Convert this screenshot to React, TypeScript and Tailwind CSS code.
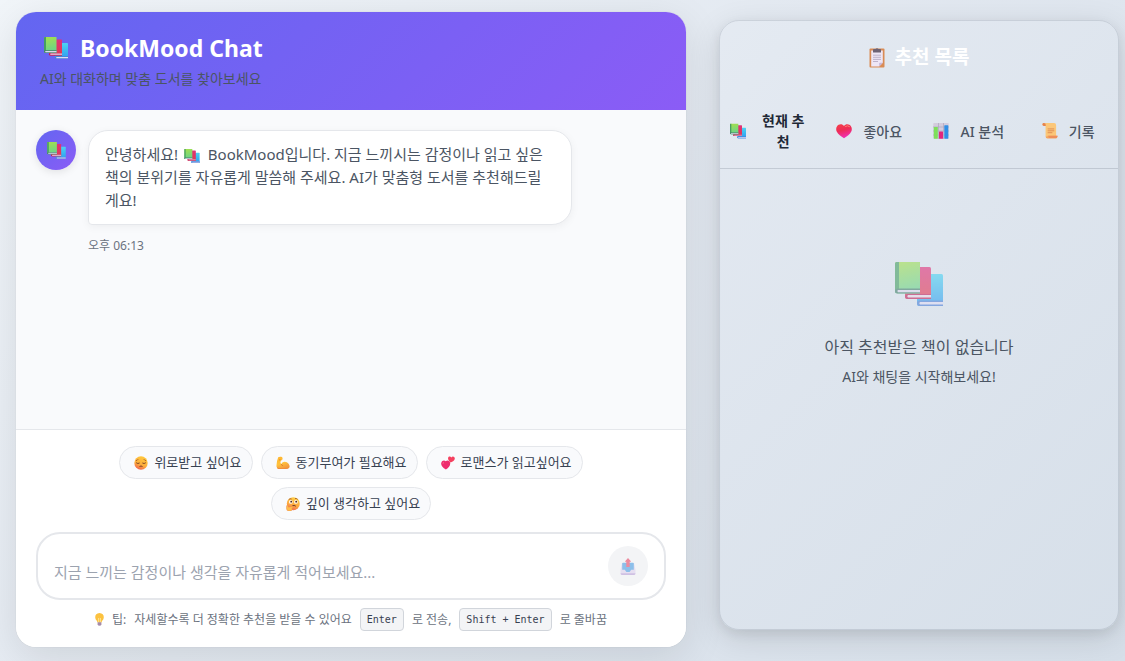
import { useId, useState } from 'react'
import type { ReactNode } from 'react'

interface IconProps {
  className?: string
}

function BooksIcon({ className }: IconProps) {
  const id = useId()
  return (
    <svg viewBox="0 0 48 44" className={className} aria-hidden="true">
      <defs>
        <linearGradient id={`${id}g`} x1="0" y1="0" x2="0.2" y2="1">
          <stop offset="0" stopColor="#a6e04b" />
          <stop offset="1" stopColor="#69d48b" />
        </linearGradient>
        <linearGradient id={`${id}r`} x1="0" y1="0" x2="0" y2="1">
          <stop offset="0" stopColor="#e0307a" />
          <stop offset="1" stopColor="#e33a4c" />
        </linearGradient>
        <linearGradient id={`${id}b`} x1="0" y1="0" x2="0" y2="1">
          <stop offset="0" stopColor="#4bd3f2" />
          <stop offset="1" stopColor="#2f9bf0" />
        </linearGradient>
      </defs>
      <path d="M22 13q0-1 1-1h23.500q1.500 0 1.500 1.500V44H24q-2 0-2-2.500z" fill={`url(#${id}b)`} />
      <path d="M22 41q0-2.500 2.500-2.500H48V44H24.500Q22 44 22 41z" fill="#4b7fd6" />
      <path d="M25 40h23v2.500H25q-1.500-1.200 0-2.500z" fill="#e0dcf3" />
      <path d="M10 6q0-1 1-1h23.500Q36 5 36 6.500V37H12.500Q10 37 10 34z" fill={`url(#${id}r)`} />
      <path d="M10 34.500Q10 32 12.500 32H36v5H12.500Q10 37 10 34.500z" fill="#c21f58" />
      <path d="M13 33h23v2.500H13q-1.500-1.200 0-2.500z" fill="#ecd9e6" />
      <path d="M0 1.500Q0 0 1.500 0H25v31.500H2.500Q0 31.500 0 29z" fill={`url(#${id}g)`} />
      <path d="M0 1.500Q0 0 1.500 0H4v31H2q-2 0-2-2z" fill="#459f62" />
      <path d="M0 29q0-2.500 2.500-2.500H25v5H2.500Q0 31.500 0 29z" fill="#44806c" />
      <path d="M3 28h22v2.300H3q-1.500-1.200 0-2.300z" fill="#ddd8ec" />
    </svg>
  )
}

function ClipboardIcon({ className }: IconProps) {
  return (
    <svg viewBox="0 0 16 20" className={className} aria-hidden="true">
      <rect x="0.500" y="0.500" width="15" height="19" rx="1" fill="#d98b55" />
      <path d="M2.200 2.500h11.600v12.200l-3.600 3.800h-8z" fill="#eee6f6" />
      <path d="M13.800 14.700l-3.600 3.800v-3q0-.8.8-.8z" fill="#c7b6d8" />
      <path d="M4 1.800Q4 1 5 1h1.500q1.500-1.500 3 0H11q1 0 1 .8v2.700H4z" fill="#6d6375" />
      <path d="M4 7.200h8M4 9.300h8M4 11.400h8M4 13.500h5" stroke="#b7abc5" strokeWidth="0.900" />
    </svg>
  )
}

function HeartIcon({ className }: IconProps) {
  const id = useId()
  return (
    <svg viewBox="0 0 16 16" className={className} aria-hidden="true">
      <defs>
        <linearGradient id={id} x1="0" y1="0" x2="0.300" y2="1">
          <stop offset="0" stopColor="#f5404a" />
          <stop offset="0.500" stopColor="#ee2c56" />
          <stop offset="1" stopColor="#f030b0" />
        </linearGradient>
      </defs>
      <path
        d="M8 3.100C6.700 1 4.300.8 2.600 1.800.3 3.200-.4 6 .7 8.500 2 11.400 5 13.500 8 15.200c3-1.700 6-3.800 7.300-6.700 1.100-2.500.4-5.300-1.900-6.700C11.700.8 9.300 1 8 3.100z"
        fill={`url(#${id})`}
      />
      <path d="M9.500 3.400q2-1.500 4 .2" stroke="#ff7f76" strokeWidth="1" fill="none" strokeLinecap="round" />
    </svg>
  )
}

function ChartIcon({ className }: IconProps) {
  return (
    <svg viewBox="0 0 16 16" className={className} aria-hidden="true">
      <rect x="0.300" y="0" width="15.400" height="15.800" rx="0.800" fill="#d3ccdd" />
      <path d="M5.500 0v16M10.500 0v16M0 4h16M0 8h16M0 12h16" stroke="#aea6bd" strokeWidth="0.700" />
      <rect x="0.800" y="4" width="4" height="11.800" rx="0.500" fill="#7de05a" />
      <rect x="6" y="8.500" width="4" height="7.300" rx="0.500" fill="#e2267c" />
      <rect x="11.300" y="2.200" width="4" height="13.600" rx="0.500" fill="#2f8fe6" />
    </svg>
  )
}

function ScrollIcon({ className }: IconProps) {
  return (
    <svg viewBox="0 0 16 17" className={className} aria-hidden="true">
      <path d="M1.500 0h10.800q2.200 0 2.200 2.300V14H3.300V3H1.500Q0 3 0 1.500T1.500 0z" fill="#fbc779" />
      <path d="M1.500 0Q3.500 0 3.500 2v1.200H1.500Q0 3 0 1.500T1.500 0z" fill="#e5824f" />
      <path d="M5.300 13.500H16q0 3-2.500 3H5.500q-2.200 0-2.200-2.500h2z" fill="#f6a55c" />
      <path d="M6 13.600h10q0 1.300-1 2.300H7z" fill="#ee8f5b" />
      <path d="M5.500 6.300h7M5.500 8.300h7M5.500 10.300h5" stroke="#dc8550" strokeWidth="0.900" />
    </svg>
  )
}

function PensiveIcon({ className }: IconProps) {
  const id = useId()
  return (
    <svg viewBox="0 0 14 14" className={className} aria-hidden="true">
      <defs>
        <linearGradient id={id} x1="0.700" y1="0" x2="0.300" y2="1">
          <stop offset="0" stopColor="#ffc93c" />
          <stop offset="0.600" stopColor="#fdae3c" />
          <stop offset="1" stopColor="#f0604d" />
        </linearGradient>
      </defs>
      <circle cx="7" cy="7" r="6.700" fill={`url(#${id})`} />
      <path d="M2 4.600q1.200 0 2.200-1.400M12 4.600q-1.200 0-2.200-1.400" stroke="#8f4326" strokeWidth="0.700" fill="none" />
      <path d="M2.200 6.700q1.600 1.500 3.400.3M11.800 6.700q-1.600 1.500-3.400.3" stroke="#5c2b25" strokeWidth="0.800" fill="none" />
      <path d="M5.500 10.500q1.500-1 3 0" stroke="#5c2b25" strokeWidth="0.800" fill="none" />
    </svg>
  )
}

function MuscleIcon({ className }: IconProps) {
  const id = useId()
  return (
    <svg viewBox="0 0 14 14" className={className} aria-hidden="true">
      <defs>
        <linearGradient id={id} x1="0" y1="0" x2="0.400" y2="1">
          <stop offset="0" stopColor="#ffb52e" />
          <stop offset="0.600" stopColor="#ffc23c" />
          <stop offset="1" stopColor="#f39a3e" />
        </linearGradient>
      </defs>
      <path
        d="M2.200 1.300Q3.500.3 5.200.8q1.500.4 1.400 1.800l-.3 1.200q-.5.800-1.500.7l-.4 2.600q.6.300.9.900 1-2.200 3.500-2.200 2.300 0 3.800 2 1.500 2.200.8 3.700-.6 1.300-3 1.400L3 13Q.6 12.800.5 10.400.3 6 2.200 1.300z"
        fill={`url(#${id})`}
      />
      <path d="M5.300 8q.3 1.600 1.800 1.800M3 3.900h1.700" stroke="#db7a2e" strokeWidth="0.800" fill="none" />
      <path d="M1 11.400Q5 12.800 12.900 11.500q-.7 1.300-2.800 1.300L3 13q-1.500 0-2-1.600z" fill="#ef8a3c" />
    </svg>
  )
}

function TwoHeartsIcon({ className }: IconProps) {
  return (
    <svg viewBox="0 0 14 14" className={className} aria-hidden="true">
      <path
        d="M4.800 5.300C3.300 3.900.9 4.500.3 6.700c-.7 2.400 1.200 4.800 4.600 6.900 2.800-1.600 4.600-4.200 4.300-6.500-.3-2.200-3-3.400-4.400-1.800z"
        fill="#ee2d6e"
      />
      <path
        d="M10.400 1.400C9.500-.1 7.500.2 7.100 1.700c-.3 1.500.4 3.300 2.500 4.800 2.300-.7 3.900-2 4.200-3.700.2-2-2.200-3.100-3.400-1.400z"
        fill="#f5405f"
      />
      <path d="M3 6.200q-1 .3-1 1.600" stroke="#ff7590" strokeWidth="0.800" fill="none" />
    </svg>
  )
}

function ThinkingIcon({ className }: IconProps) {
  const id = useId()
  return (
    <svg viewBox="0 0 14 14" className={className} aria-hidden="true">
      <defs>
        <linearGradient id={id} x1="0.600" y1="0" x2="0.300" y2="1">
          <stop offset="0" stopColor="#ffd044" />
          <stop offset="0.600" stopColor="#fca63f" />
          <stop offset="1" stopColor="#ef6454" />
        </linearGradient>
      </defs>
      <circle cx="7.300" cy="6.700" r="6.500" fill={`url(#${id})`} />
      <circle cx="4.800" cy="4.900" r="1.900" fill="#fff6e8" />
      <circle cx="9.900" cy="4.900" r="1.900" fill="#fff6e8" />
      <circle cx="5.200" cy="4.700" r="0.900" fill="#482422" />
      <circle cx="10.200" cy="4.700" r="0.900" fill="#482422" />
      <path d="M2.800 2.500Q4 1.300 5.600 2M9 1.500q1.700-.4 2.700.9" stroke="#8f4326" strokeWidth="0.700" fill="none" />
      <path d="M6.200 9q2-1.300 3.600.2" stroke="#5c2b25" strokeWidth="0.900" fill="none" />
      <path
        d="M.6 8.700q1-.8 1.600.2l.3 1.300 4.300-.9q1.300 0 .9 1l-1.900.7q1.200.8-.1 2.500-.7.600-2.500.6Q.500 13.900.4 11.500z"
        fill="#ffbd4a"
        stroke="#e87a49"
        strokeWidth="0.400"
      />
    </svg>
  )
}

function OutboxIcon({ className }: IconProps) {
  return (
    <svg viewBox="0 0 16 17" className={className} aria-hidden="true">
      <path d="M2 5h12l1.500 7v3q0 2-1.500 2H2Q.5 17 .5 15v-3z" fill="#e6dff1" />
      <path d="M.5 15.300h15q0 1.700-1.500 1.700H2Q.5 17 .5 15.300z" fill="#cfc1e3" />
      <path d="M3 4.800h10q.8 0 .8.800v6.200h-2.600l-1.600 2.100H6.400l-1.600-2.100H2.200V5.600q0-.8.800-.8z" fill="#8dbfea" />
      <path d="M8 0l2.900 3.300q.2.500-.4.500h-.8V9H6.300V3.800h-.8q-.6 0-.4-.5z" fill="#ec8b9f" />
    </svg>
  )
}

function BulbIcon({ className }: IconProps) {
  return (
    <svg viewBox="0 0 9 13" className={className} aria-hidden="true">
      <path d="M4.500 0Q8.800.3 8.800 4.300q0 2-1.600 3.500l-.8 1.700H2.600l-.8-1.700Q.2 6.300.2 4.300.2.3 4.500 0z" fill="#fcc240" />
      <path d="M3.600 5v4M5.400 5v4" stroke="#fff0b5" strokeWidth="0.700" />
      <path d="M2.600 9.300h3.800v2.100q-.3 1.300-1.900 1.300t-1.900-1.300z" fill="#a58ba9" />
    </svg>
  )
}

const quickMoods = [
  { label: '위로받고 싶어요', Icon: PensiveIcon },
  { label: '동기부여가 필요해요', Icon: MuscleIcon },
  { label: '로맨스가 읽고싶어요', Icon: TwoHeartsIcon },
  { label: '깊이 생각하고 싶어요', Icon: ThinkingIcon },
]

const tabs = [
  { id: 'current', label: '현재 추천', Icon: BooksIcon },
  { id: 'liked', label: '좋아요', Icon: HeartIcon },
  { id: 'analysis', label: 'AI 분석', Icon: ChartIcon },
  { id: 'history', label: '기록', Icon: ScrollIcon },
]

function Key({ children }: { children: ReactNode }) {
  return (
    <kbd className="rounded border border-[#d1d5db] bg-[#f3f4f6] px-1.5 font-['DejaVu_Sans_Mono',monospace] text-[10px] leading-[21px] text-[#374151]">
      {children}
    </kbd>
  )
}

function ChatPanel() {
  const [message, setMessage] = useState('')

  return (
    <section className="flex min-w-0 flex-1 flex-col overflow-hidden rounded-[20px] bg-white shadow-[0_10px_40px_rgba(0,0,0,0.1),0_0_1px_rgba(0,0,0,0.2)]">
      {/* Header */}
      <header className="bg-[linear-gradient(135deg,#6366f1,#8b5cf6)] px-6 py-5">
        <h1 className="flex items-center gap-3 pl-1 text-[23px] leading-8 font-bold text-white">
          <BooksIcon className="h-[22px] w-6" />
          BookMood Chat
        </h1>
        <p className="mt-1 text-sm leading-[22px] text-[#4b5563]">AI와 대화하며 맞춤 도서를 찾아보세요</p>
      </header>

      {/* Messages */}
      <div className="flex-1 bg-[#f9fafc] p-5">
        <div className="flex max-w-[85%] items-start gap-3">
          <div className="flex size-10 shrink-0 items-center justify-center rounded-full bg-[linear-gradient(135deg,#6366f1,#8b5cf6)] shadow-[0_2px_8px_rgba(0,0,0,0.1)]">
            <BooksIcon className="h-[17px] w-[19px]" />
          </div>
          <div>
            <p className="rounded-[20px] rounded-bl-sm border border-[#e5e7eb] bg-white py-3 pr-5 pl-4 text-[15px] leading-[23px] text-[#4b5563] shadow-[0_2px_8px_rgba(0,0,0,0.05)]">
              안녕하세요! <BooksIcon className="mr-1 ml-0.5 inline h-[14px] w-4" /> BookMood입니다. 지금 느끼시는 감정이나 읽고 싶은
              책의 분위기를 자유롭게 말씀해 주세요. AI가 맞춤형 도서를 추천해드릴게요!
            </p>
            <time className="mt-[11px] block text-xs leading-5 text-[#6b7280]">오후 06:13</time>
          </div>
        </div>
      </div>

      {/* Input */}
      <footer className="border-t border-[#e5e7eb] bg-white px-5 py-4">
        <div className="flex flex-wrap justify-center gap-2">
          {quickMoods.map(({ label, Icon }) => (
            <button
              key={label}
              type="button"
              className="flex items-center gap-1.5 rounded-full border border-[#e5e7eb] bg-[#f9fafc] py-1.5 pr-2.5 pl-3.5 text-[13px] leading-[19px] text-[#374151]"
            >
              <Icon className="size-3.5" />
              {label}
            </button>
          ))}
        </div>

        <form
          onSubmit={(e) => e.preventDefault()}
          className="mt-3 flex items-end gap-3 rounded-3xl border-2 border-[#e5e7eb] bg-white px-4 py-3"
        >
          <textarea
            aria-label="메시지"
            rows={1}
            value={message}
            onChange={(e) => setMessage(e.target.value)}
            placeholder="지금 느끼는 감정이나 생각을 자유롭게 적어보세요..."
            className="h-10 flex-1 resize-none overflow-hidden bg-transparent pt-3.5 text-[15px] leading-6 text-[#374151] outline-none placeholder:text-[#9ca3af]"
          />
          <button
            type="submit"
            aria-label="전송"
            className="flex size-10 shrink-0 items-center justify-center rounded-full bg-[#f3f4f6]"
          >
            <OutboxIcon className="h-[17px] w-4" />
          </button>
        </form>

        <div className="mt-2 flex flex-wrap items-center justify-center gap-2 text-xs text-[#6b7280]">
          <BulbIcon className="h-[13px] w-[9px]" />
          <span>팁:</span>
          <span>자세할수록 더 정확한 추천을 받을 수 있어요</span>
          <Key>Enter</Key>
          <span>로 전송,</span>
          <Key>Shift + Enter</Key>
          <span>로 줄바꿈</span>
        </div>
      </footer>
    </section>
  )
}

function RecommendationPanel() {
  const [activeTab, setActiveTab] = useState('current')

  return (
    <aside className="mt-2 mb-[17px] w-[400px] shrink-0 rounded-[20px] border border-gray-500/20 shadow-[0_8px_32px_rgba(0,0,0,0.12),0_4px_12px_rgba(0,0,0,0.07)]">
      <h2 className="flex items-center justify-center gap-2.5 p-6 text-[19px] leading-[25px] font-bold text-white">
        <ClipboardIcon className="h-5 w-4" />
        추천 목록
      </h2>

      <div role="tablist" className="flex border-b border-gray-500/25">
        {tabs.map(({ id, label, Icon }) => (
          <button
            key={id}
            type="button"
            role="tab"
            aria-selected={activeTab === id}
            onClick={() => setActiveTab(id)}
            className={`flex flex-1 basis-0 items-center justify-center gap-[11px] px-2.5 py-4 text-sm leading-[21px] ${
              activeTab === id ? 'font-semibold text-[#1f2937]' : 'font-medium text-[#4b5563]'
            }`}
          >
            <Icon className="size-4 shrink-0" />
            <span>{label}</span>
          </button>
        ))}
      </div>

      <div className="flex flex-col items-center px-6 pt-[93px] pb-10 text-[#4b5563]">
        <BooksIcon className="h-11 w-12 opacity-60" />
        <p className="mt-7 text-base leading-[26px]">아직 추천받은 책이 없습니다</p>
        <p className="mt-1.5 text-sm leading-[22px]">AI와 채팅을 시작해보세요!</p>
      </div>
    </aside>
  )
}

export default function App() {
  return (
    <main className="flex min-h-screen gap-[33px] bg-linear-135 from-slate-100 via-slate-200 to-[#d6dfe9] pt-3 pr-1.5 pb-3.5 pl-4 font-['Noto_Sans','Noto_Sans_CJK_KR',sans-serif]">
      <ChatPanel />
      <RecommendationPanel />
    </main>
  )
}
